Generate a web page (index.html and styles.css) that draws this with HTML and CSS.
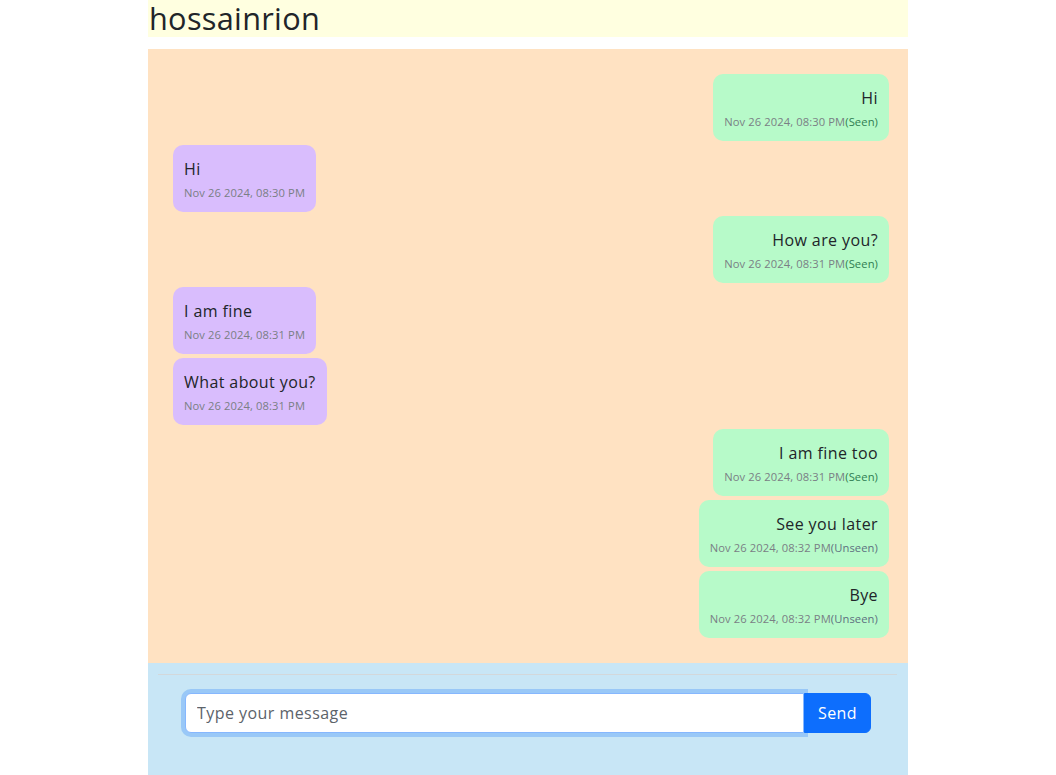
FILE: index.html
```html
<!DOCTYPE html>
<html lang="en">
<head>
<meta charset="utf-8">
<title>Chat</title>
<link rel="stylesheet" href="styles.css">
</head>
<body>
<div class="app">
  <h2 class="header">hossainrion</h2>
  <div class="chat">
    <div class="msg me"><div class="msg-text">Hi</div><div class="msg-meta">Nov 26 2024, 08:30 PM<span class="seen">(Seen)</span></div></div>
    <div class="msg them"><div class="msg-text">Hi</div><div class="msg-meta">Nov 26 2024, 08:30 PM</div></div>
    <div class="msg me"><div class="msg-text">How are you?</div><div class="msg-meta">Nov 26 2024, 08:31 PM<span class="seen">(Seen)</span></div></div>
    <div class="msg them"><div class="msg-text">I am fine</div><div class="msg-meta">Nov 26 2024, 08:31 PM</div></div>
    <div class="msg them"><div class="msg-text">What about you?</div><div class="msg-meta">Nov 26 2024, 08:31 PM</div></div>
    <div class="msg me"><div class="msg-text">I am fine too</div><div class="msg-meta">Nov 26 2024, 08:31 PM<span class="seen">(Seen)</span></div></div>
    <div class="msg me"><div class="msg-text">See you later</div><div class="msg-meta">Nov 26 2024, 08:32 PM<span class="unseen">(Unseen)</span></div></div>
    <div class="msg me"><div class="msg-text">Bye</div><div class="msg-meta">Nov 26 2024, 08:32 PM<span class="unseen">(Unseen)</span></div></div>
  </div>
  <div class="composer">
    <hr class="divider">
    <form class="input-group" onsubmit="return false">
      <input class="message-input" type="text" placeholder="Type your message" autofocus>
      <button class="send-btn" type="submit">Send</button>
    </form>
  </div>
</div>
</body>
</html>
```

FILE: styles.css
```css
* { box-sizing: border-box; }

body {
  margin: 0;
  background: #ffffff;
  color: #212529;
  font-family: "Open Sans", "Noto Sans", sans-serif;
  font-size: 16px;
  line-height: 1.5;
}

.app {
  width: 760px;
  margin: 0 auto;
}

.header {
  margin: 0 0 12px 0;
  padding: 0 0 0 1px;
  background: #ffffe0;
  font-size: 30.7px;
  font-weight: 400;
  line-height: 37px;
  letter-spacing: 0.3px;
}

.chat {
  background: #ffe2c2;
  padding: 25px 19px 25px 25px;
  display: flex;
  flex-direction: column;
  gap: 4px;
}

.msg {
  padding: 12px 11px 10px;
  border-radius: 10px;
}

.msg.me {
  align-self: flex-end;
  background: #b7fac9;
  text-align: right;
}

.msg.them {
  align-self: flex-start;
  background: #d9bdfd;
}

.msg-text {
  font-size: 16px;
  line-height: 24px;
  letter-spacing: 0.4px;
}

.msg-meta {
  margin-top: 3px;
  font-size: 11.2px;
  line-height: 18px;
  color: #7a7f85;
  letter-spacing: 0.1px;
}

.seen { color: #2f7d52; }
.unseen { color: #5d7080; }

.composer {
  background: #c8e6f6;
  padding: 11px 11px 42px 10px;
}

.divider {
  margin: 0 0 18px 0;
  border: 0;
  height: 1px;
  background: #d3d8db;
}

.input-group {
  display: flex;
  margin: 0 26px 0 27px;
}

.message-input {
  flex: 1;
  height: 40px;
  padding: 0 11px;
  border: 1px solid #86b7fe;
  border-radius: 6px 0 0 6px;
  background: #ffffff;
  font-family: inherit;
  font-size: 16px;
  letter-spacing: 0.45px;
  color: #212529;
  outline: none;
  box-shadow: 0 0 0 4px rgba(13, 110, 253, 0.25);
  position: relative;
  z-index: 1;
}

.message-input::placeholder {
  color: #5c636a;
}

.send-btn {
  height: 40px;
  padding: 0 13px;
  border: 1px solid #0d6efd;
  border-radius: 0 6px 6px 0;
  background: #0d6efd;
  color: #ffffff;
  font-family: inherit;
  font-size: 16px;
  letter-spacing: 0.4px;
}
```
